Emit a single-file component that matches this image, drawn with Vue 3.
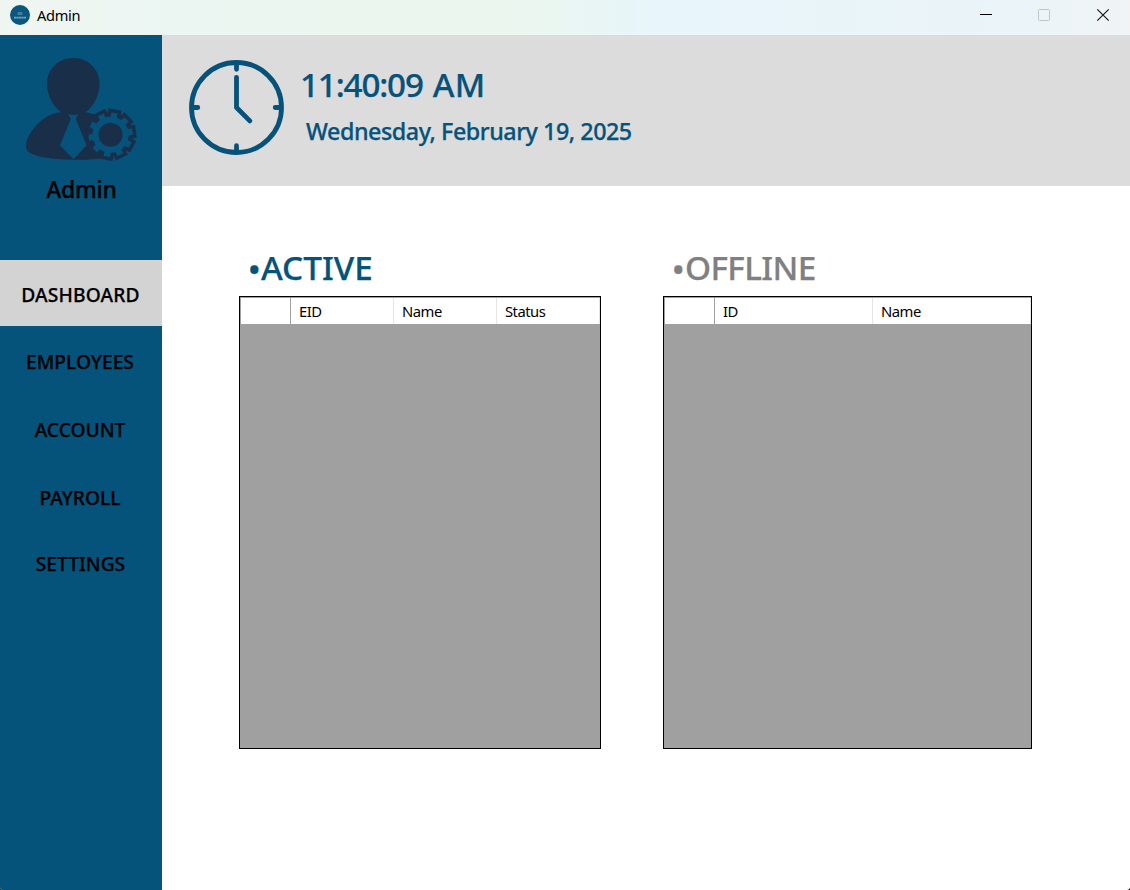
<script setup>
const menu = [
  { label: 'DASHBOARD', cls: 'active' },
  { label: 'EMPLOYEES', cls: 'employees' },
  { label: 'ACCOUNT', cls: 'account' },
  { label: 'PAYROLL', cls: 'payroll' },
  { label: 'SETTINGS', cls: 'settings' },
]

const grids = [
  { title: 'ACTIVE', cls: 'online', columns: ['EID', 'Name', 'Status'] },
  { title: 'OFFLINE', cls: 'offline', columns: ['ID', 'Name'] },
]

// Ten-toothed gear outline centred on (cx, cy).
function gearPath(cx, cy, root, tip, start) {
  const points = []
  for (let i = 0; i < 10; i++) {
    const mid = start + i * 36
    for (const [offset, radius] of [[-10, root], [-8, tip], [8, tip], [10, root]]) {
      const a = ((mid + offset) * Math.PI) / 180
      points.push(`${(cx + radius * Math.cos(a)).toFixed(2)} ${(cy + radius * Math.sin(a)).toFixed(2)}`)
    }
  }
  return `M${points.join('L')}Z`
}
const gear = gearPath(110.6, 134.7, 18.2, 22.3, -80)
</script>

<template>
  <div class="window">
    <header class="titlebar">
      <svg class="app-icon" width="20" height="20" viewBox="0 0 20 20">
        <circle cx="10" cy="10" r="10" fill="#09577f" />
        <rect x="7.5" y="7" width="5" height="3" rx="1" fill="#5791ad" opacity=".7" />
        <path d="M4 12.7h12" stroke="#a3c5d4" stroke-width="1.8" stroke-dasharray="2.2 .3" opacity=".7" />
      </svg>
      <span class="window-title">Admin</span>
      <svg class="controls" width="130" height="20" viewBox="0 0 130 20">
        <path d="M0 7.500h12" stroke="#000" />
        <rect x="58.500" y="2.500" width="11" height="11" rx="1" fill="none" stroke="#c1c5c8" />
        <path d="M117.300 2.300l11.400 11.400M128.700 2.300l-11.400 11.400" stroke="#15181a" stroke-width="1.200" />
      </svg>
    </header>

    <div class="body">
      <aside class="sidebar">
        <svg class="avatar" width="114" height="106" viewBox="25 57 114 106">
          <g fill="#192e49">
            <path d="M73.3 58C88 58 99.6 69 99.6 84C99.6 96 92 108.500 85.200 112.300C91 113 95.500 115 99 117L112 130L108 157C96 159.800 84 159.800 73.500 159.700C55 159.500 39 158 29.500 152.500C26.500 150.500 25.800 148 26.200 144C28 131 45 112.500 61.500 112.300C54 107.500 47 96 47 84C47 69 58.500 58 73.300 58Z" />
            <path :d="gear" stroke="#192e49" stroke-width="7" stroke-linejoin="miter" />
          </g>
          <path d="M68 113.800Q73.300 116.400 78.300 113.800L75.800 119L86.600 145.500L73.500 159.300L60 145.500L70.700 119Z" fill="#05527b" />
          <path :d="gear" fill="#05527b" />
          <circle cx="110.600" cy="134.700" r="12" fill="#192e49" />
        </svg>
        <div class="user">Admin</div>
        <nav>
          <div v-for="item in menu" :key="item.label" class="item" :class="item.cls">{{ item.label }}</div>
        </nav>
      </aside>

      <main>
        <section class="banner">
          <svg class="clock" width="96" height="96" viewBox="0 0 96 96" fill="none" stroke="#05527b" stroke-width="4.800" stroke-linecap="round" stroke-linejoin="round">
            <circle cx="47.500" cy="48.500" r="45" />
            <path d="M47.500 4.500v5.800M47.500 92.500v-5.800M3.500 48.500h5.300M91.500 48.500h-5.300M47.500 18.300V48.500L60.800 61.900" />
          </svg>
          <div class="when">
            <div class="time"><span class="digits">11:40:09</span> AM</div>
            <div class="date">Wednesday, February 19, 2025</div>
          </div>
        </section>

        <section class="grids">
          <article v-for="g in grids" :key="g.title" :class="g.cls">
            <h2><span class="dot">•</span>{{ g.title }}</h2>
            <div class="grid">
              <div class="head">
                <div class="corner"></div>
                <div v-for="c in g.columns" :key="c" class="col">{{ c }}</div>
              </div>
            </div>
          </article>
        </section>
      </main>
    </div>
  </div>
</template>

<style>
body { background: #000; }
</style>

<style scoped>
.window {
  width: 1130px;
  height: 890px;
  display: flex;
  flex-direction: column;
  overflow: hidden;
  border-radius: 0 0 3px 3px;
  background: #fff;
  color: #000;
  font-family: "Noto Sans", "Open Sans", sans-serif;
  font-weight: 500;
  white-space: nowrap;
}
.titlebar {
  box-sizing: border-box;
  flex: none;
  height: 35px;
  padding: 5px 20px 0 10px;
  display: flex;
  align-items: flex-start;
  background: linear-gradient(90deg, #f0f5f0 0, #ebf6f3 170px, #ebf6ee 400px, #eaf6ef 540px, #e8f5fa 650px, #ebf4f8 1040px, #f1f3f5 1130px);
}
.app-icon { display: block; }
.window-title {
  margin-left: 7px;
  font-size: 14.600px;
  font-weight: 400;
  line-height: 21px;
  letter-spacing: -0.300px;
}
.controls {
  display: block;
  margin: 2px 0 0 auto;
}
.body { flex: 1; display: flex; min-height: 0; }

.sidebar {
  width: 162px;
  flex: none;
  background: #05527b;
}
.avatar { display: block; margin: 22px 0 0 25px; }
.user {
  box-sizing: border-box;
  width: 162px;
  height: 40px;
  padding-left: 1px;
  margin-top: 6px;
  font-size: 23px;
  line-height: 40px;
  letter-spacing: -0.250px;
  text-align: center;
}
.user, .item, .time, .date, h2 { -webkit-text-stroke: 0.250px currentColor; }
nav { margin-top: 51px; }
.item {
  height: 66px;
  line-height: 69px;
  font-size: 19.200px;
  text-align: center;
  padding-right: 1px;
}
.active { background: #d3d3d3; letter-spacing: 0.180px; }
.employees { margin-top: 1px; padding-right: 2px; }
.account { margin-top: 2px; padding-right: 2px; }
.payroll { margin-top: 2px; padding-right: 2px; }
.settings { padding-right: 1px; }

main { flex: 1; min-width: 0; }
.banner {
  height: 151px;
  display: flex;
  background: #dcdcdc;
  color: #05527b;
}
.clock { display: block; margin: 24px 0 0 27px; }
.when { padding: 25px 0 0 15px; }
.time {
  height: 50px;
  line-height: 50px;
  font-size: 33.200px;
  letter-spacing: 0.300px;
}
.digits { letter-spacing: -1.150px; margin-right: 1px; }
.date {
  padding-left: 6px;
  height: 40px;
  line-height: 42px;
  font-size: 23.300px;
  letter-spacing: -0.460px;
}

.grids {
  display: flex;
  gap: 62px;
  padding: 57px 0 0 77px;
}
.online { width: 362px; }
.offline { width: 369px; }
h2 {
  margin: 0;
  padding-left: 9px;
  height: 53px;
  line-height: 48px;
  font-size: 33.300px;
  font-weight: 500;
  letter-spacing: 0;
  color: #05527b;
}
.offline h2 { color: #808080; letter-spacing: -0.650px; }
h2 .dot {
  display: inline-block;
  letter-spacing: 0.400px;
  transform: translateY(1.500px);
}
.grid {
  box-sizing: border-box;
  height: 453px;
  border: 1px solid #000;
  background: #a0a0a0;
}
.head {
  height: 26px;
  display: flex;
  background: #fff;
  border-top: 1px solid #a0a0a0;
  font-size: 14.800px;
  font-weight: 400;
  line-height: 27px;
  letter-spacing: -0.500px;
}
.corner {
  box-sizing: border-box;
  width: 51px;
  border-left: 1px solid #a0a0a0;
  border-right: 1px solid #a0a0a0;
}
.col {
  box-sizing: border-box;
  width: 103px;
  padding-left: 8px;
  border-right: 1px solid #e5e5e5;
}
.offline .col { width: 158px; }
</style>
